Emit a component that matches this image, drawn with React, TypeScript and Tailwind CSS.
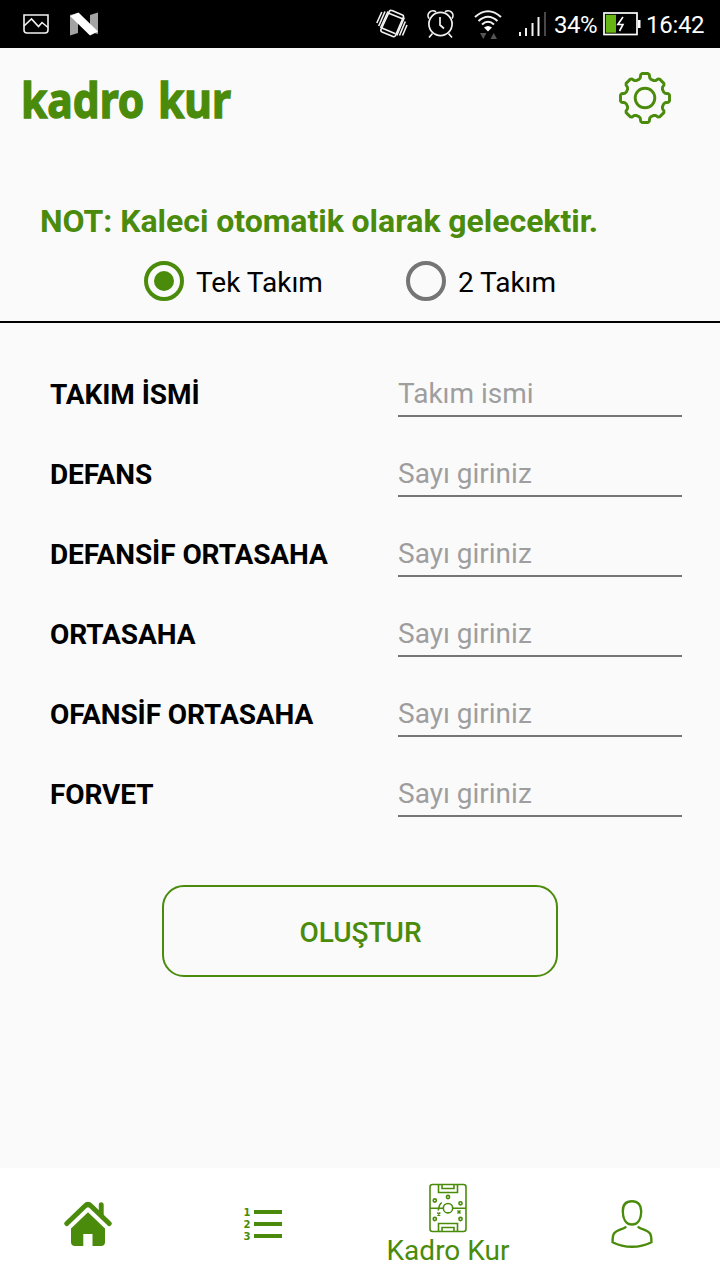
import React, { useState } from 'react';

type SquadMode = 'single' | 'double';

interface FieldConfig {
  id: string;
  label: string;
  placeholder: string;
}

const FIELDS: FieldConfig[] = [
  { id: 'name', label: 'TAKIM İSMİ', placeholder: 'Takım ismi' },
  { id: 'defence', label: 'DEFANS', placeholder: 'Sayı giriniz' },
  { id: 'dm', label: 'DEFANSİF ORTASAHA', placeholder: 'Sayı giriniz' },
  { id: 'mid', label: 'ORTASAHA', placeholder: 'Sayı giriniz' },
  { id: 'am', label: 'OFANSİF ORTASAHA', placeholder: 'Sayı giriniz' },
  { id: 'forward', label: 'FORVET', placeholder: 'Sayı giriniz' },
];

// Outline of the gear: 8 teeth around the centre of a 54x54 box
const gearPath = () => {
  const tooth = [[-6, -18.6], [-4.8, -20], [-4.2, -23.4], [-3, -24.5], [3, -24.5], [4.2, -23.4], [4.8, -20], [6, -18.6]];
  const points: string[] = [];
  for (let i = 0; i < 8; i++) {
    const a = (i * Math.PI) / 4;
    // the diagonal teeth are slightly shorter
    const cut = i % 2 === 0 ? 0 : 0.8;
    tooth.forEach(([x, y]) => {
      const ty = y < -20 ? y + cut : y;
      const px = 27 + x * Math.cos(a) - ty * Math.sin(a);
      const py = 27 + x * Math.sin(a) + ty * Math.cos(a);
      points.push(`${px.toFixed(2)} ${py.toFixed(2)}`);
    });
  }
  return `M${points.join('L')}Z`;
};

const GearIcon = () => (
  <svg width="54" height="54" viewBox="0 0 54 54" fill="none" stroke="#4a8b0b" strokeWidth="2.9" strokeLinejoin="round">
    <path d={gearPath()} />
    <circle cx="27" cy="27" r="9.8" />
  </svg>
);

const StatusBar = () => (
  <div className="flex h-12 shrink-0 items-center bg-black text-white">
    {/* Notifications */}
    <svg className="ml-[23px] shrink-0" width="26" height="20" viewBox="0 0 26 20" fill="none" stroke="#f2f2f2" strokeWidth="1.6">
      <path d="M1 1H25V16Q25 19 22 19H4Q1 19 1 16Z" />
      <path d="M1 12L8.500 5L15.500 12.500L19 8.500L25 13.500" />
    </svg>
    <svg className="ml-[21px] shrink-0" width="28" height="24" viewBox="0 0 28 24">
      <path d="M0 3L8 1V21L0 23.500Z" fill="#a3a3a3" />
      <path d="M20 3L28 0.500V22L20 20Z" fill="#a3a3a3" />
      <path d="M0 4L8.500 0.500L28 19.500L20 23.500Z" fill="#fff" />
    </svg>

    {/* System icons */}
    <svg className="ml-[278px] shrink-0" width="32" height="30" viewBox="0 0 32 30" fill="none" stroke="#f2f2f2" strokeWidth="1.6" strokeLinejoin="round">
      <path d="M13.500 2.200Q14.300 0.800 16 1.600L26.500 6Q28 6.700 27.300 8.300L19.500 26.500Q18.700 28.200 17 27.500L6 23Q4.300 22.200 5 20.500Z" />
      <path d="M12.800 4.200L26.500 9.800M5.800 19L19.500 24.800" />
      <path d="M5.800 3L0.800 14M9 2.500L2.700 17M12 2.500L4.500 19M31 16L26.500 26.500M29.300 12.500L23.500 26.500M28.300 8.500L20.800 26.500" />
    </svg>
    <svg className="ml-[19px] shrink-0" width="27" height="30" viewBox="0 0 27 30" fill="none" stroke="#f2f2f2" strokeWidth="1.7">
      <circle cx="13.500" cy="15" r="11.600" />
      <path d="M13 8V16L17 19.500M5.500 24.500L2 28.500M21.500 24.500L25 28.500" />
      <path d="M2 9.500A4.800 4.800 0 0 1 9 3M18 3A4.800 4.800 0 0 1 25 9.500" />
    </svg>
    <svg className="ml-5 shrink-0" width="28" height="30" viewBox="0 0 28 30" fill="none" stroke="#f2f2f2" strokeWidth="2">
      <path d="M1 8Q14 -3.500 27 8M4.500 12Q14 3.500 23.500 12M8 15.500Q14 10 20 15.500" />
      <path d="M10 18.500Q14 15.500 18 18.500L14 22.500Z" fill="#fff" stroke="none" />
      <path d="M6 24H12.500L9.300 30ZM16.500 30H23L19.700 24Z" fill="#555" stroke="none" />
    </svg>
    <svg className="ml-[17px] shrink-0" width="28" height="24" viewBox="0 0 28 24">
      <path d="M0 20H2V24H0ZM6 16H8V24H6ZM12.500 11H14.500V24H12.500ZM18.500 5H20.500V24H18.500Z" fill="#f2f2f2" />
      <path d="M25 0H27V24H25Z" fill="#484848" />
    </svg>
    <span className="ml-[7px] mt-0.5 w-[44px] whitespace-nowrap text-[24px] leading-none tracking-[-0.5px]">34%</span>
    <svg className="ml-[5px] shrink-0" width="38" height="24" viewBox="0 0 38 24">
      <rect x="1" y="1" width="33" height="21.500" fill="none" stroke="#fff" strokeWidth="1.700" />
      <path d="M35 8H37.500V16H35Z" fill="#fff" />
      <path d="M2.800 2.800H13V20.700H2.800Z" fill="#66b512" />
      <path d="M20 5L14.800 12.500H20L16.500 19" fill="none" stroke="#fff" strokeWidth="1.600" />
    </svg>
    <span className="ml-[5px] mt-0.5 whitespace-nowrap text-[24px] leading-none tracking-[-0.3px]">16:42</span>
  </div>
);

interface RadioOptionProps {
  label: string;
  checked: boolean;
  onSelect: () => void;
}

const RadioOption: React.FC<RadioOptionProps> = ({ label, checked, onSelect }) => (
  <button role="radio" aria-checked={checked} onClick={onSelect} className="flex items-center gap-3">
    <span className={`flex size-10 items-center justify-center rounded-full border-4 ${checked ? 'border-[#4a8b0b]' : 'border-[#757575]'}`}>
      {checked && <span className="size-5 rounded-full bg-[#4a8b0b]" />}
    </span>
    <span className="mt-[3px] text-[28px] leading-8 text-black">{label}</span>
  </button>
);

const BottomNav = () => (
  <nav className="flex h-28 shrink-0 bg-white text-[#4a8b0b]">
    <button className="flex w-44 items-center justify-center" aria-label="home">
      <svg width="48" height="46" viewBox="0 0 48 46" fill="currentColor">
        <path d="M34.800 4Q34.800 1.300 37.200 1.300T39.700 4V17L34.800 12Z" />
        <path d="M2.800 22.500L21 5Q24 2 27 5L45.200 22.500" fill="none" stroke="currentColor" strokeWidth="5" strokeLinecap="round" />
        <path d="M24 11.300L41 27.500V41Q41 45 37 45H28.500V33H19.300V45H11Q7 45 7 41V27.500Z" />
      </svg>
    </button>
    <button className="flex w-[174px] items-center justify-center" aria-label="list">
      <svg width="38" height="36" viewBox="0 0 38 36" fill="currentColor">
        <path d="M10 4H38V8H10ZM10 16H38V20H10ZM10 28H38V32H10Z" />
        <g fontFamily="DejaVu Sans" fontSize="11" fontWeight="700">
          <text x="-0.500" y="10" textLength="7" lengthAdjust="spacingAndGlyphs">1</text>
          <text x="-0.500" y="22" textLength="7" lengthAdjust="spacingAndGlyphs">2</text>
          <text x="-0.500" y="34" textLength="7" lengthAdjust="spacingAndGlyphs">3</text>
        </g>
      </svg>
    </button>
    <button className="flex w-[196px] flex-col items-center pt-[15px]">
      <svg width="38" height="50" viewBox="0 0 38 50" fill="none" stroke="currentColor" strokeWidth="1.600">
        <rect x="1" y="1.500" width="36" height="47" rx="2.500" />
        <path d="M9.500 1.500V9.500H28.500V1.500M13 1.500V5.500H25V1.500M9.500 48.500V40.500H28.500V48.500M13 48.500V44.500H25V48.500" />
        <path d="M1 25.200H14.300M23.700 25.200H37M12.700 19.500Q9.800 22 9.300 27.500" />
        <circle cx="19" cy="25.200" r="4.700" />
        <circle cx="5.800" cy="17.500" r="1.600" />
        <circle cx="19" cy="14" r="1.600" />
        <circle cx="31.500" cy="20.300" r="1.600" />
        <circle cx="5.800" cy="36" r="1.600" />
        <circle cx="31.500" cy="36" r="1.600" />
        <path d="M8.300 29.500L11.300 32.500M11.300 29.500L8.300 32.500M28.500 27.500L31.500 30.500M31.500 27.500L28.500 30.500" />
      </svg>
      <span className="mt-0.5 whitespace-nowrap text-[28px] leading-8">Kadro Kur</span>
    </button>
    <button className="flex w-[172px] items-center justify-center" aria-label="profile">
      <svg width="42" height="50" viewBox="0 0 42 50" fill="none" stroke="currentColor" strokeWidth="2.400" strokeLinecap="round">
        <path d="M21 2.300C15 2.300 11.800 6 11.800 12C11.800 19.500 14.800 25.500 21 25.500C27.200 25.500 30.200 19.500 30.200 12C30.200 6 27 2.300 21 2.300Z" />
        <path d="M14.500 28.200C10 31 5.500 31.200 3.200 34.200C1.500 36.500 1.500 40 1.600 43.200C8 46.500 15 47.800 21 47.800C27 47.800 34 46.500 40.400 43.200C40.500 40 40.500 36.500 38.800 34.200C36.500 31.200 32 31 27.500 28.200" />
      </svg>
    </button>
  </nav>
);

export default function App() {
  const [mode, setMode] = useState<SquadMode>('single');
  const [values, setValues] = useState<Record<string, string>>({});

  return (
    <div className="flex h-[1280px] w-[720px] flex-col overflow-hidden bg-[#fafafa] font-['Roboto',sans-serif]">
      <StatusBar />

      <header className="flex h-[152px] shrink-0 items-start justify-between pl-[21px] pr-12">
        <h1 className="mt-[19px] origin-left scale-x-[0.885] whitespace-nowrap font-['Noto_Sans',sans-serif] text-[48px] font-bold leading-[66px] text-[#4a8b0b] [-webkit-text-stroke:1.4px_#4a8b0b] [word-spacing:3px]">
          kadro kur
        </h1>
        <button className="mt-[23px]" aria-label="settings">
          <GearIcon />
        </button>
      </header>

      <section className="h-[123px] shrink-0 border-b-2 border-black">
        <p className="whitespace-nowrap pl-10 text-[32px] font-bold leading-[42px] tracking-[-0.04px] text-[#4a8b0b]">
          NOT: Kaleci otomatik olarak gelecektir.
        </p>
        <div role="radiogroup" className="mt-[19px] flex gap-[83px] pl-36">
          <RadioOption label="Tek Takım" checked={mode === 'single'} onSelect={() => setMode('single')} />
          <RadioOption label="2 Takım" checked={mode === 'double'} onSelect={() => setMode('double')} />
        </div>
      </section>

      <main className="flex-1 pt-[47px]">
        {FIELDS.map((field) => (
          <div key={field.id} className="flex h-20 items-start pl-[50px] pr-[38px]">
            <label htmlFor={field.id} className="w-[348px] whitespace-nowrap text-[28px] font-bold leading-[50px] tracking-[-0.08px] text-black">
              {field.label}
            </label>
            <input
              id={field.id}
              value={values[field.id] ?? ''}
              onChange={(e) => setValues({ ...values, [field.id]: e.target.value })}
              placeholder={field.placeholder}
              className="h-[47px] w-[284px] rounded-none border-b-2 border-[#757575] pt-0.5 text-[28px] text-black outline-none placeholder:text-[#9e9e9e]"
            />
          </div>
        ))}

        <button className="mx-auto mt-[35px] flex h-[92px] w-[396px] items-center justify-center rounded-[22px] border-2 border-[#4a8b0b] pl-px pt-1 text-[28px] font-medium text-[#4a8b0b]">
          OLUŞTUR
        </button>
      </main>

      <BottomNav />
    </div>
  );
}
